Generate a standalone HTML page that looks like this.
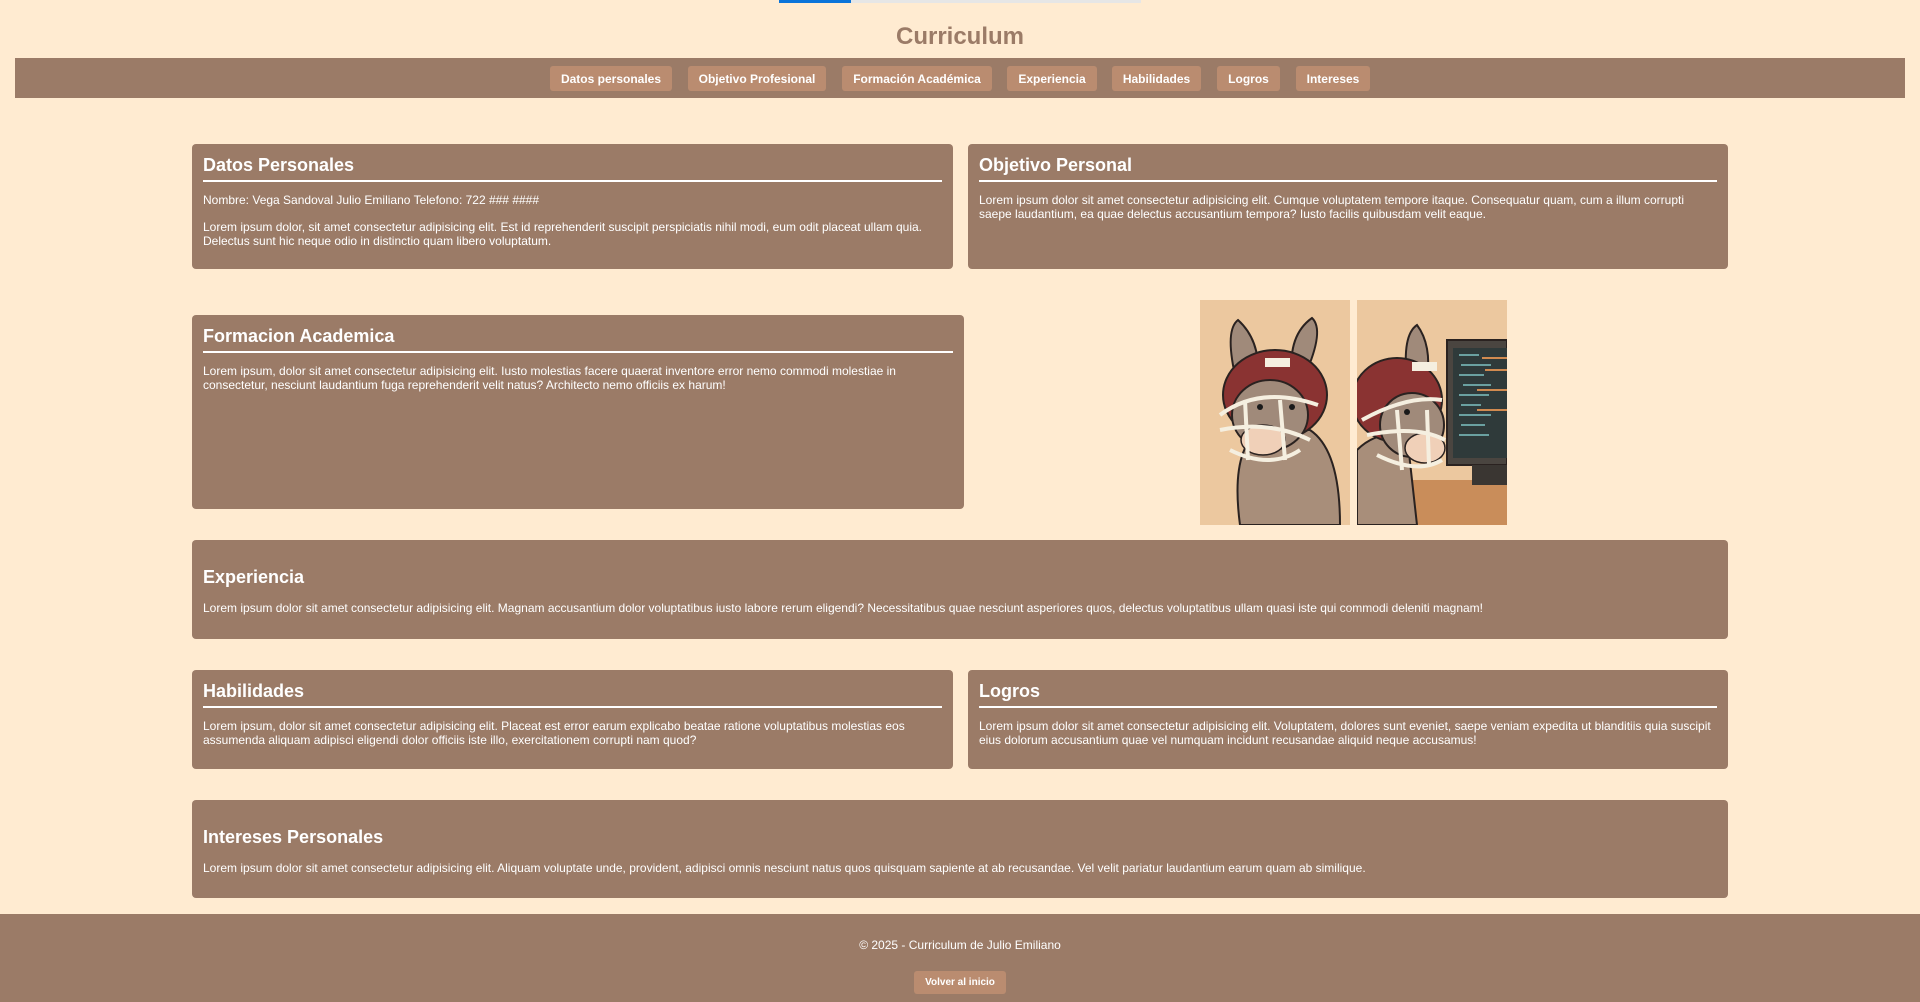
<!DOCTYPE html>
<html><head><meta charset="utf-8"><style>
*{margin:0;padding:0;box-sizing:border-box}
body{width:1920px;height:1002px;background:#ffebd1;font-family:"Liberation Sans",Arial,sans-serif;position:relative;overflow:hidden;color:#fff}
.bar1{position:absolute;top:0;left:779px;width:72px;height:3px;background:#0a74da}
.bar2{position:absolute;top:0;left:851px;width:290px;height:3px;background:#e6e6e6}
h1{position:absolute;top:22px;left:0;width:1920px;text-align:center;font-size:24px;color:#9b7b67;font-weight:bold;line-height:30px}
nav{position:absolute;left:15px;top:58px;width:1890px;height:40px;background:#9b7b67}
nav a{position:absolute;top:8px;height:25px;background:#ba8c70;border-radius:3px;font-size:12px;font-weight:bold;line-height:26px;text-align:center;color:#fff;text-decoration:none}
.c{position:absolute;background:#9b7b67;border-radius:4px;padding:11px 11px 0 11px}
.c h2{font-size:18px;line-height:20px;font-weight:bold}
.c .hr{height:1.5px;background:#fff;margin-top:5px}
.c p{font-size:12px;line-height:14px;margin-top:11px;white-space:nowrap}
.c p+p{margin-top:13px}
.nh{padding-top:27px}
.nh p{margin-top:14px}
footer{position:absolute;left:0;top:914px;width:1920px;height:88px;background:#9b7b67}
footer .t{position:absolute;top:23px;width:100%;text-align:center;font-size:12px;line-height:16px}
footer .b{position:absolute;left:914px;top:57px;width:92px;height:23px;background:#ba8c70;border-radius:3px;font-size:10px;font-weight:bold;line-height:24px;text-align:center}
svg{position:absolute}
</style></head><body>
<div class="bar1"></div><div class="bar2"></div>
<h1>Curriculum</h1>
<nav>
<a style="left:535px;width:122px">Datos personales</a>
<a style="left:673px;width:138px">Objetivo Profesional</a>
<a style="left:827px;width:150px">Formación Académica</a>
<a style="left:992px;width:90px">Experiencia</a>
<a style="left:1097px;width:89px">Habilidades</a>
<a style="left:1202px;width:63px">Logros</a>
<a style="left:1281px;width:74px">Intereses</a>
</nav>

<div class="c" style="left:192px;top:144px;width:761px;height:125px">
<h2>Datos Personales</h2><div class="hr"></div>
<p>Nombre: Vega Sandoval Julio Emiliano Telefono: 722 ### ####</p>
<p>Lorem ipsum dolor, sit amet consectetur adipisicing elit. Est id reprehenderit suscipit perspiciatis nihil modi, eum odit placeat ullam quia.<br>Delectus sunt hic neque odio in distinctio quam libero voluptatum.</p>
</div>
<div class="c" style="left:968px;top:144px;width:760px;height:125px">
<h2>Objetivo Personal</h2><div class="hr"></div>
<p>Lorem ipsum dolor sit amet consectetur adipisicing elit. Cumque voluptatem tempore itaque. Consequatur quam, cum a illum corrupti<br>saepe laudantium, ea quae delectus accusantium tempora? Iusto facilis quibusdam velit eaque.</p>
</div>
<div class="c" style="left:192px;top:315px;width:772px;height:194px">
<h2>Formacion Academica</h2><div class="hr"></div>
<p>Lorem ipsum, dolor sit amet consectetur adipisicing elit. Iusto molestias facere quaerat inventore error nemo commodi molestiae in<br>consectetur, nesciunt laudantium fuga reprehenderit velit natus? Architecto nemo officiis ex harum!</p>
</div>

<svg style="left:1200px;top:300px" width="150" height="225" viewBox="0 0 150 225">
<rect width="150" height="225" fill="#ecc89f"/>
<path d="M40 225 Q30 150 60 130 L110 130 Q140 150 140 225Z" fill="#a88e7a" stroke="#2a2220" stroke-width="2"/>
<path d="M35 75 Q25 30 38 20 Q60 40 58 75Z" fill="#a08a7a" stroke="#2a2220" stroke-width="2"/>
<path d="M105 75 Q125 30 112 18 Q88 35 92 75Z" fill="#a08a7a" stroke="#2a2220" stroke-width="2"/>
<ellipse cx="75" cy="95" rx="52" ry="45" fill="#8a3332" stroke="#2a2220" stroke-width="2"/>
<ellipse cx="70" cy="115" rx="38" ry="35" fill="#a08a7a" stroke="#2a2220" stroke-width="2"/>
<ellipse cx="63" cy="140" rx="22" ry="15" fill="#f0d0b8" stroke="#2a2220" stroke-width="1.5"/>
<circle cx="60" cy="107" r="3" fill="#1a1a1a"/><circle cx="92" cy="107" r="3" fill="#1a1a1a"/>
<path d="M20 115 Q60 85 118 105 M20 130 Q70 120 110 140 M30 150 Q70 170 100 150 M45 100 L48 160 M80 100 L85 160" fill="none" stroke="#f5efe0" stroke-width="4"/>
<rect x="65" y="58" width="25" height="9" fill="#f5efe0"/>
</svg>
<svg style="left:1357px;top:300px" width="150" height="225" viewBox="0 0 150 225">
<rect width="150" height="225" fill="#ecc89f"/>
<rect x="0" y="180" width="150" height="45" fill="#c98d5a"/>
<rect x="90" y="40" width="60" height="125" fill="#4a4540" stroke="#2a2220" stroke-width="2"/>
<rect x="96" y="48" width="54" height="110" fill="#2f3a3a"/>
<path d="M102 55h20M104 65h30M102 75h25M106 85h28M102 95h30M104 105h20M102 115h32M104 125h24M102 135h30" stroke="#6aa0a0" stroke-width="2"/>
<path d="M125 58h25M128 70h22M120 90h30M120 110h30" stroke="#d08a50" stroke-width="2"/>
<rect x="115" y="165" width="35" height="20" fill="#3a3632"/>
<path d="M0 225 L0 150 Q20 130 50 135 L60 225Z" fill="#a88e7a" stroke="#2a2220" stroke-width="2"/>
<path d="M50 80 Q45 35 60 25 Q75 45 70 80Z" fill="#a08a7a" stroke="#2a2220" stroke-width="2"/>
<ellipse cx="40" cy="100" rx="45" ry="42" fill="#8a3332" stroke="#2a2220" stroke-width="2"/>
<ellipse cx="55" cy="125" rx="32" ry="32" fill="#a08a7a" stroke="#2a2220" stroke-width="2"/>
<ellipse cx="68" cy="148" rx="20" ry="15" fill="#f0d0b8" stroke="#2a2220" stroke-width="1.5"/>
<circle cx="50" cy="112" r="3" fill="#1a1a1a"/>
<path d="M5 120 Q50 95 85 100 M10 135 Q60 125 88 140 M20 155 Q60 175 85 160 M40 110 L45 170 M70 110 L72 165" fill="none" stroke="#f5efe0" stroke-width="4"/>
<rect x="55" y="62" width="25" height="9" fill="#f5efe0"/>
</svg>

<div class="c nh" style="left:192px;top:540px;width:1536px;height:99px">
<h2>Experiencia</h2>
<p>Lorem ipsum dolor sit amet consectetur adipisicing elit. Magnam accusantium dolor voluptatibus iusto labore rerum eligendi? Necessitatibus quae nesciunt asperiores quos, delectus voluptatibus ullam quasi iste qui commodi deleniti magnam!</p>
</div>
<div class="c" style="left:192px;top:670px;width:761px;height:99px">
<h2>Habilidades</h2><div class="hr"></div>
<p>Lorem ipsum, dolor sit amet consectetur adipisicing elit. Placeat est error earum explicabo beatae ratione voluptatibus molestias eos<br>assumenda aliquam adipisci eligendi dolor officiis iste illo, exercitationem corrupti nam quod?</p>
</div>
<div class="c" style="left:968px;top:670px;width:760px;height:99px">
<h2>Logros</h2><div class="hr"></div>
<p>Lorem ipsum dolor sit amet consectetur adipisicing elit. Voluptatem, dolores sunt eveniet, saepe veniam expedita ut blanditiis quia suscipit<br>eius dolorum accusantium quae vel numquam incidunt recusandae aliquid neque accusamus!</p>
</div>
<div class="c nh" style="left:192px;top:800px;width:1536px;height:98px">
<h2>Intereses Personales</h2>
<p>Lorem ipsum dolor sit amet consectetur adipisicing elit. Aliquam voluptate unde, provident, adipisci omnis nesciunt natus quos quisquam sapiente at ab recusandae. Vel velit pariatur laudantium earum quam ab similique.</p>
</div>

<footer>
<div class="t">© 2025 - Curriculum de Julio Emiliano</div>
<div class="b">Volver al inicio</div>
</footer>
</body></html>
